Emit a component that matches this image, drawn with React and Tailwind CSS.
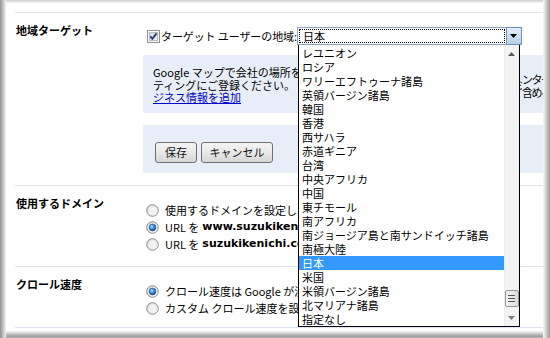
import React from "react";

const items = [
  "レユニオン",
  "ロシア",
  "ワリーエフトゥーナ諸島",
  "英領バージン諸島",
  "韓国",
  "香港",
  "西サハラ",
  "赤道ギニア",
  "台湾",
  "中央アフリカ",
  "中国",
  "東チモール",
  "南アフリカ",
  "南ジョージア島と南サンドイッチ諸島",
  "南極大陸",
  "日本",
  "米国",
  "米領バージン諸島",
  "北マリアナ諸島",
  "指定なし",
];

function Checkbox() {
  return (
    <svg width="13" height="13" viewBox="0 0 13 13" className="shrink-0">
      <defs>
        <linearGradient id="cbg" x1="0" y1="0" x2="1" y2="1">
          <stop offset="0" stopColor="#cfd3dc" />
          <stop offset="1" stopColor="#f4f5f8" />
        </linearGradient>
      </defs>
      <rect x="0.5" y="0.5" width="12" height="12" fill="#fbfbfb" stroke="#8e8f8f" />
      <rect x="2.5" y="2.5" width="8" height="8" fill="url(#cbg)" stroke="#b9bdc6" />
      <path d="M3.3 6.4 L5.4 8.9 L9.6 3.4" fill="none" stroke="#283c78" strokeWidth="1.8" />
    </svg>
  );
}

function Radio({ checked }) {
  return (
    <svg width="13" height="13" viewBox="0 0 13 13" className="shrink-0">
      <defs>
        <linearGradient id="rbg" x1="0" y1="0" x2="1" y2="1">
          <stop offset="0" stopColor="#d2d2d2" />
          <stop offset="1" stopColor="#fbfbfb" />
        </linearGradient>
        <radialGradient id="rdot" cx="0.4" cy="0.35" r="0.7">
          <stop offset="0" stopColor="#a6dcff" />
          <stop offset="0.5" stopColor="#3b8ed8" />
          <stop offset="1" stopColor="#0d3e82" />
        </radialGradient>
      </defs>
      <circle cx="6.5" cy="6.5" r="5.8" fill="url(#rbg)" stroke="#8e8f8f" strokeWidth="1" />
      <circle cx="6.5" cy="6.5" r="4" fill="#f2f2f2" />
      {checked && <circle cx="6.5" cy="6.5" r="3.4" fill="url(#rdot)" stroke="#1a4f8f" strokeWidth="0.6" />}
    </svg>
  );
}

function DropList() {
  return (
    <div className="absolute left-0 top-[17px] w-[222px] h-[282px] bg-white border-x border-b border-black flex z-10">
      <div className="w-[205px] pt-[1px]">
        {items.map((t) => (
          <div
            key={t}
            className={
              t === "日本"
                ? "h-[14px] leading-[14px] pl-[3px] whitespace-nowrap bg-[#3399ff] text-white"
                : "h-[14px] leading-[14px] pl-[3px] whitespace-nowrap"
            }
          >
            {t}
          </div>
        ))}
      </div>
      <div className="w-[15px] bg-[#f3f3f3] border-l border-[#ececec] flex flex-col">
        <div className="h-[17px] flex items-center justify-center">
          <svg width="7" height="4" viewBox="0 0 7 4">
            <path d="M0 4 L3.5 0 L7 4 Z" fill="#5a5a5a" />
          </svg>
        </div>
        <div className="flex-1 flex flex-col justify-end items-center pb-[2px]">
          <div className="w-[14px] h-[17px] rounded-[2px] border border-[#979797] bg-gradient-to-r from-[#f2f2f2] to-[#dcdcdc] flex flex-col items-center justify-center gap-[2px]">
            <div className="w-[7px] h-px bg-[#555]" />
            <div className="w-[7px] h-px bg-[#555]" />
            <div className="w-[7px] h-px bg-[#555]" />
          </div>
        </div>
        <div className="h-[17px] flex items-center justify-center">
          <svg width="7" height="4" viewBox="0 0 7 4">
            <path d="M0 0 L7 0 L3.5 4 Z" fill="#7a7a7a" />
          </svg>
        </div>
      </div>
    </div>
  );
}

function Select() {
  return (
    <div className="relative w-[225px] h-[18px] border border-[#8da2c2] bg-white flex shrink-0">
      <div className="flex-1 m-[1px] border border-dotted border-black flex items-center pl-[3px] leading-none">
        日本
      </div>
      <div className="w-[16px] -my-px -mr-px border border-[#6a8fbb] rounded-r-[2px] bg-gradient-to-b from-[#e6f0fa] to-[#b6d0ea] flex items-center justify-center">
        <svg width="7" height="4" viewBox="0 0 7 4">
          <path d="M0 0 L7 0 L3.5 4 Z" fill="#000" />
        </svg>
      </div>
      <DropList />
    </div>
  );
}

function Button({ children, w }) {
  return (
    <div
      className={`${w} h-[21px] rounded-[3px] border border-[#707070] bg-gradient-to-b from-[#f4f4f4] via-[#e8e8e8] to-[#d6d6d6] flex items-center justify-center leading-none text-[#111]`}
    >
      {children}
    </div>
  );
}

export default function App() {
  return (
    <div className="w-[550px] h-[338px] pt-[3px] pl-[6px] pr-[7px] pb-[7px] bg-[#efefef] shadow-[inset_1px_0_0_#9a9a9a,inset_2px_0_0_#a9a9a9,inset_3px_0_0_#b9b9b9,inset_4px_0_0_#cacaca,inset_5px_0_0_#dadada,inset_6px_0_0_#eaeaea,inset_-1px_0_0_#a0a0a0,inset_-2px_0_0_#adadad,inset_-3px_0_0_#bcbcbc,inset_-4px_0_0_#cbcbcb,inset_-5px_0_0_#d9d9d9,inset_-6px_0_0_#e6e6e6,inset_-7px_0_0_#f1f1f1,inset_0_-1px_0_#b0b0b0,inset_0_-2px_0_#a2a2a2,inset_0_-3px_0_#acacac,inset_0_-4px_0_#bcbcbc,inset_0_-5px_0_#cdcdcd,inset_0_-6px_0_#dddddd,inset_0_-7px_0_#ececec,inset_0_1px_0_#d4d4d4,inset_0_2px_0_#e2e2e2,inset_0_3px_0_#eeeeee]">
      <div className="w-full h-full bg-white overflow-hidden relative pt-[9px] pl-[9px] font-['Noto_Sans_CJK_JP','Liberation_Sans',sans-serif] text-[11px] text-black">
        {/* Section 1 */}
        <div className="flex border-t border-[#dfe5ee]">
          <div className="w-[128px] shrink-0 pt-[11px] pl-px font-bold leading-[12px]">地域ターゲット</div>
          <div className="flex-1 min-w-0 pt-[14px] pb-[12px]">
            <div className="flex items-center h-[18px] relative z-10">
              <span className="ml-[4px] flex">
                <Checkbox />
              </span>
              <span className="ml-[1px] shrink-0 whitespace-nowrap leading-[18px] tracking-[-0.1px]">
                ターゲット ユーザーの地域:
              </span>
              <Select />
            </div>
            <div className="mt-[10px] h-[58px] bg-[#e8eef7] pl-[10px] flex overflow-hidden">
              <div className="w-[369px] shrink-0 pt-[11px] leading-[12.5px] overflow-hidden whitespace-nowrap">
                <div>Google マップで会社の場所を知らせるには、ローカル ビジネス</div>
                <div>ティングにご登録ください。 会社の情報は Google プレイスのローカル ビジネス セ</div>
                <div>
                  <span className="text-[#0000cc] underline">ジネス情報を追加</span>
                </div>
              </div>
              <div className="pt-[18px] leading-[13px] whitespace-nowrap tracking-[-1.5px]">
                <div>ンター(</div>
                <div>含めるこ</div>
              </div>
            </div>
            <div className="mt-[12px] h-[48px] bg-[#e8eef7] pl-[12px] pt-[17px] flex gap-[4px]">
              <Button w="w-[42px]">保存</Button>
              <Button w="w-[72px]">キャンセル</Button>
            </div>
          </div>
        </div>

        {/* Section 2 */}
        <div className="flex border-t border-[#dfe5ee]">
          <div className="w-[128px] shrink-0 pt-[11px] pl-px font-bold leading-[12px]">使用するドメイン</div>
          <div className="flex-1 min-w-0 pt-[16px] pb-[13px]">
            <div className="flex items-center h-[17px] whitespace-nowrap">
              <span className="ml-[3px] flex"><Radio /></span>
              <span className="ml-[6px]">使用するドメインを設定しない</span>
            </div>
            <div className="flex items-center h-[17px] whitespace-nowrap">
              <span className="ml-[3px] flex"><Radio checked /></span>
              <span className="ml-[6px]">URL を </span>
              <span className="ml-[3px] font-bold font-['DejaVu_Sans',sans-serif] text-[11px]">www.suzukikenichi.com</span>
              <span> として表示</span>
            </div>
            <div className="flex items-center h-[17px] whitespace-nowrap">
              <span className="ml-[3px] flex"><Radio /></span>
              <span className="ml-[6px]">URL を </span>
              <span className="ml-[3px] font-bold font-['DejaVu_Sans',sans-serif] text-[11px]">suzukikenichi.com</span>
              <span> として表示</span>
            </div>
          </div>
        </div>

        {/* Section 3 */}
        <div className="flex border-t border-b border-[#dfe5ee]">
          <div className="w-[128px] shrink-0 pt-[11px] pl-px font-bold leading-[12px]">クロール速度</div>
          <div className="flex-1 min-w-0 pt-[16px] pb-[10px]">
            <div className="flex items-center h-[17px] whitespace-nowrap">
              <span className="ml-[3px] flex"><Radio checked /></span>
              <span className="ml-[6px]">クロール速度は Google が決定する（推奨）</span>
            </div>
            <div className="flex items-center h-[17px] whitespace-nowrap">
              <span className="ml-[3px] flex"><Radio /></span>
              <span className="ml-[6px]">カスタム クロール速度を設定する</span>
            </div>
          </div>
        </div>
      </div>
    </div>
  );
}
